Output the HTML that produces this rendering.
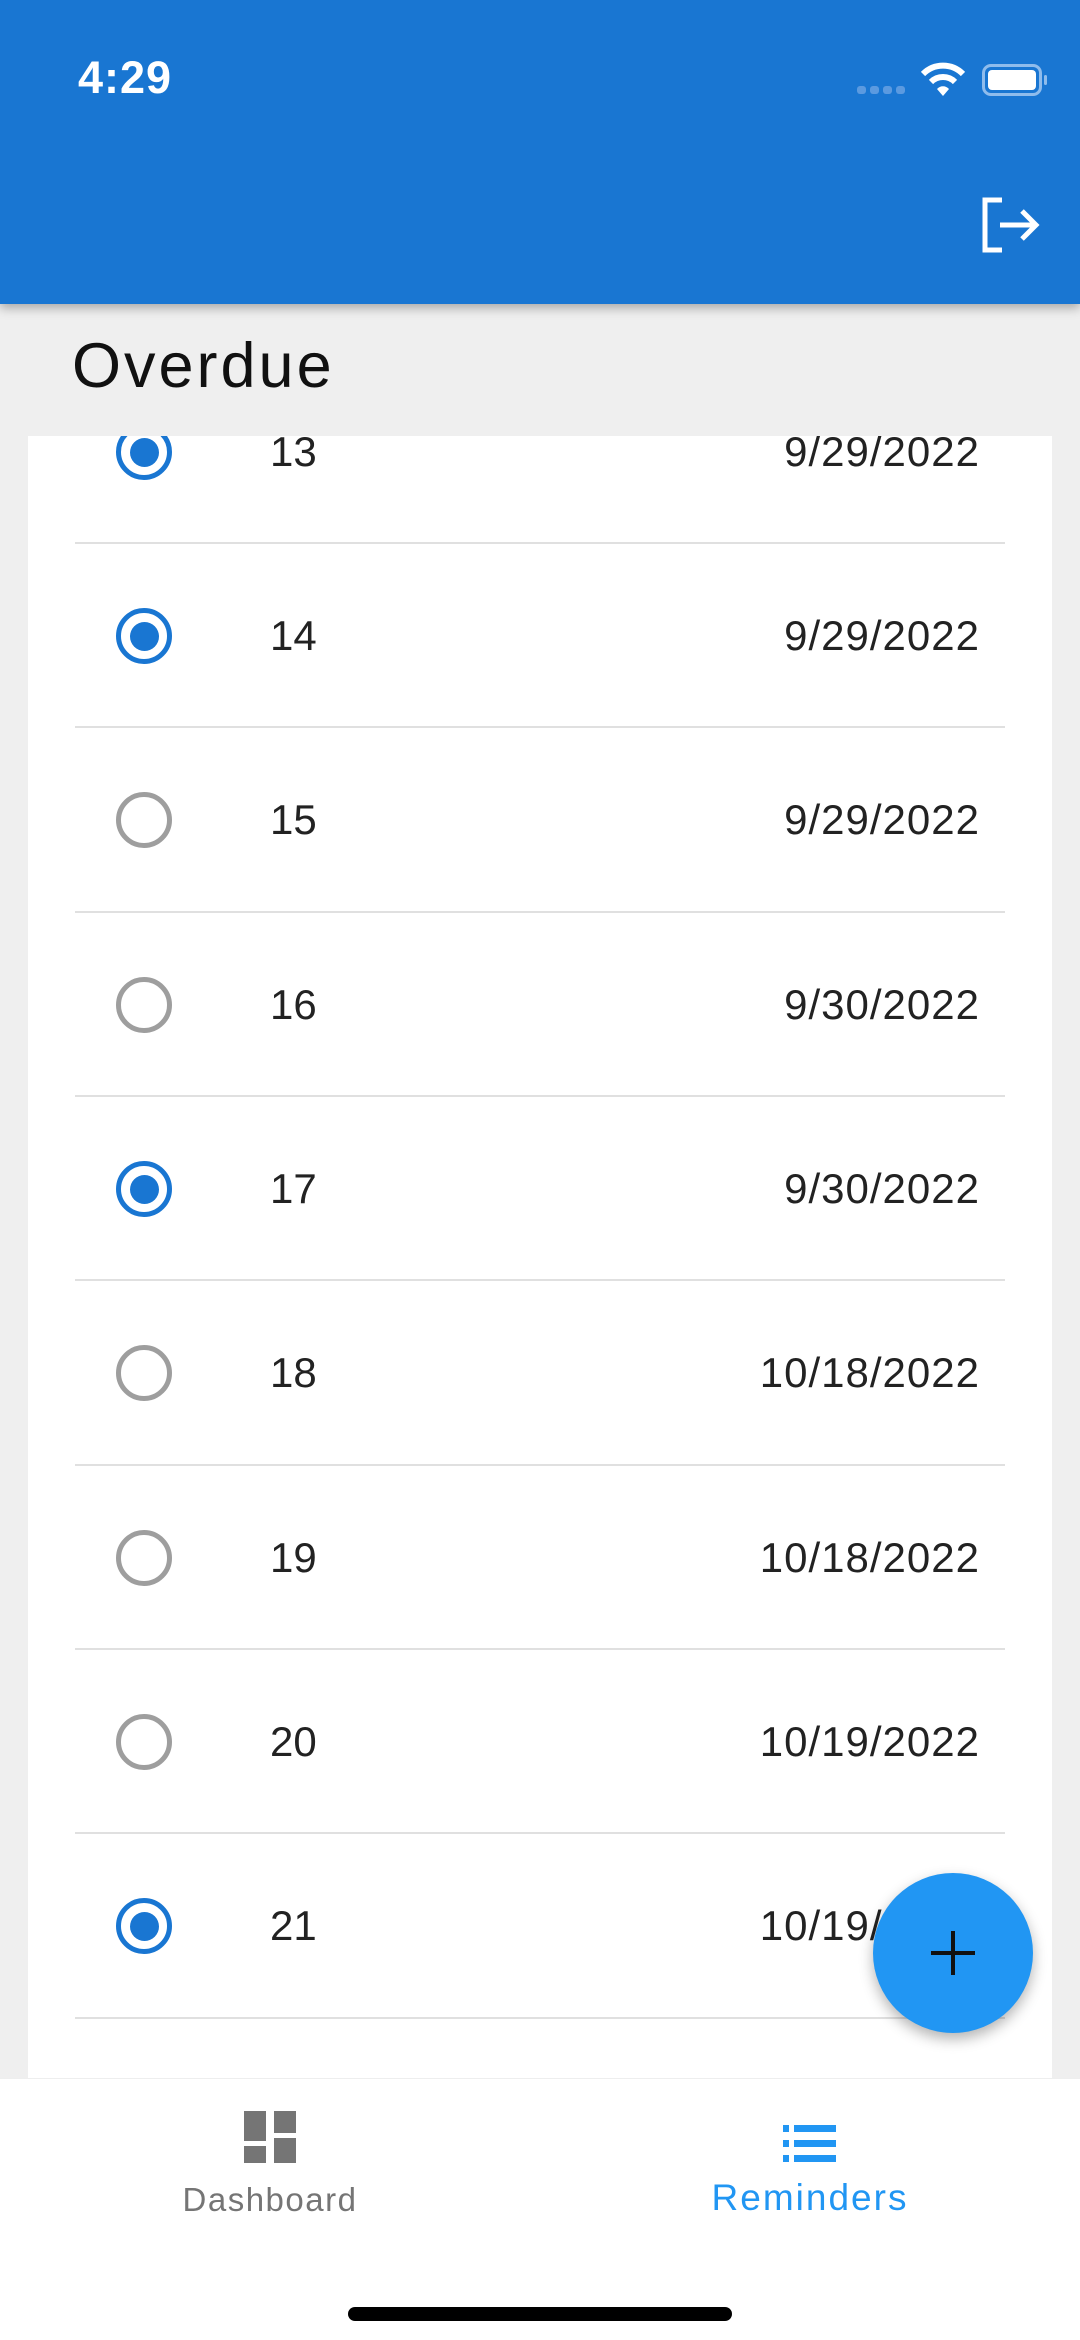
<!DOCTYPE html>
<html><head><meta charset="utf-8"><style>
*{margin:0;padding:0;box-sizing:border-box}
body{width:1080px;height:2340px;background:#efefef;position:relative;overflow:hidden;font-family:"Liberation Sans",sans-serif}
.bar{position:absolute;left:0;top:0;width:1080px;height:304px;background:#1976d2;box-shadow:0 4px 10px rgba(0,0,0,.3);z-index:3}
.time{position:absolute;left:78px;top:52px;color:#fff;font-size:45px;font-weight:bold;letter-spacing:1px}
.title{position:absolute;left:72px;top:330px;font-size:63px;color:#111;letter-spacing:3px}
.card{position:absolute;left:28px;top:436px;width:1024px;height:1642px;background:#fff;overflow:hidden}
.row{position:absolute;left:0;width:1024px;height:184px}
.radio{position:absolute;left:88px;top:64px;width:56px;height:56px;border-radius:50%;border:5px solid #9e9e9e}
.radio.on{border-color:#1976d2}
.radio.on::after{content:"";position:absolute;left:8.5px;top:8.5px;width:29px;height:29px;border-radius:50%;background:#1976d2}
.num{position:absolute;left:242px;top:68px;font-size:42px;color:#222}
.date{position:absolute;right:72px;top:68px;font-size:42px;color:#222;letter-spacing:1px}
.div{position:absolute;left:47px;width:930px;height:2px;background:#e0e0e0}
.nav{position:absolute;left:0;top:2078px;width:1080px;height:262px;background:#fff;border-top:1px solid #eee}
.fab{position:absolute;left:873px;top:1873px;width:160px;height:160px;border-radius:50%;background:#2196f3;box-shadow:0 6px 14px rgba(0,0,0,.3);z-index:4}
</style></head><body>
<div class="bar">
<div class="time">4:29</div>
<div style="position:absolute;left:857px;top:86px;width:50px;height:8px">
<span style="position:absolute;left:0;width:9px;height:8px;border-radius:3px;background:#5b9ae0"></span>
<span style="position:absolute;left:13px;width:9px;height:8px;border-radius:3px;background:#5b9ae0"></span>
<span style="position:absolute;left:26px;width:9px;height:8px;border-radius:3px;background:#5b9ae0"></span>
<span style="position:absolute;left:39px;width:9px;height:8px;border-radius:3px;background:#5b9ae0"></span>
</div>
<svg style="position:absolute;left:921px;top:62px" width="44" height="36" viewBox="0 0 44 36"><path d="M2 12 A28 28 0 0 1 42 12" stroke="#fff" stroke-width="6" fill="none"/><path d="M10 20 A17 17 0 0 1 34 20" stroke="#fff" stroke-width="6" fill="none"/><path d="M16 27 L22 34 L28 27 A8 8 0 0 0 16 27Z" fill="#fff"/></svg>
<div style="position:absolute;left:982px;top:64px;width:60px;height:32px;border:3px solid #8fbcec;border-radius:9px"><div style="position:absolute;left:3px;top:3px;width:48px;height:20px;background:#fff;border-radius:4px"></div></div>
<div style="position:absolute;left:1044px;top:75px;width:3px;height:10px;background:#8fbcec;border-radius:2px"></div>
<svg style="position:absolute;left:980px;top:197px" width="62" height="56" viewBox="0 0 62 56"><path d="M22 3 H5 V53 H22" stroke="#fff" stroke-width="5" fill="none"/><path d="M20 28 H55 M42 14 L56 28 L42 42" stroke="#fff" stroke-width="5" fill="none"/></svg>
</div>
<div class="title">Overdue</div>
<div class="card">
<div class="row" style="top:-76px"><div class="radio on"></div><div class="num">13</div><div class="date">9/29/2022</div></div>
<div class="div" style="top:106px"></div>
<div class="row" style="top:108px"><div class="radio on"></div><div class="num">14</div><div class="date">9/29/2022</div></div>
<div class="div" style="top:290px"></div>
<div class="row" style="top:292px"><div class="radio"></div><div class="num">15</div><div class="date">9/29/2022</div></div>
<div class="div" style="top:475px"></div>
<div class="row" style="top:477px"><div class="radio"></div><div class="num">16</div><div class="date">9/30/2022</div></div>
<div class="div" style="top:659px"></div>
<div class="row" style="top:661px"><div class="radio on"></div><div class="num">17</div><div class="date">9/30/2022</div></div>
<div class="div" style="top:843px"></div>
<div class="row" style="top:845px"><div class="radio"></div><div class="num">18</div><div class="date">10/18/2022</div></div>
<div class="div" style="top:1028px"></div>
<div class="row" style="top:1030px"><div class="radio"></div><div class="num">19</div><div class="date">10/18/2022</div></div>
<div class="div" style="top:1212px"></div>
<div class="row" style="top:1214px"><div class="radio"></div><div class="num">20</div><div class="date">10/19/2022</div></div>
<div class="div" style="top:1396px"></div>
<div class="row" style="top:1398px"><div class="radio on"></div><div class="num">21</div><div class="date">10/19/2022</div></div>
<div class="div" style="top:1581px"></div>
</div>
<div class="fab"><div style="position:absolute;left:58px;top:78px;width:44px;height:4px;background:#111"></div><div style="position:absolute;left:78px;top:58px;width:4px;height:44px;background:#111"></div></div>
<div class="nav">
<svg style="position:absolute;left:244px;top:32px" width="52" height="52" viewBox="0 0 52 52" fill="#757575"><rect x="0" y="0" width="22" height="30"/><rect x="30" y="0" width="22" height="22"/><rect x="0" y="35" width="22" height="17"/><rect x="30" y="27" width="22" height="25"/></svg>
<div style="position:absolute;left:0;width:540px;text-align:center;top:102px;font-size:33px;color:#757575;letter-spacing:1.5px">Dashboard</div>
<svg style="position:absolute;left:783px;top:46px" width="54" height="38" viewBox="0 0 54 38" fill="#2196f3"><rect x="0" y="0" width="6" height="7"/><rect x="11" y="0" width="42" height="7"/><rect x="0" y="15" width="6" height="7"/><rect x="11" y="15" width="42" height="7"/><rect x="0" y="30" width="6" height="7"/><rect x="11" y="30" width="42" height="7"/></svg>
<div style="position:absolute;left:540px;width:540px;text-align:center;top:98px;font-size:37px;color:#2196f3;letter-spacing:2px">Reminders</div>
<div style="position:absolute;left:348px;top:228px;width:384px;height:14px;border-radius:7px;background:#000"></div>
</div>
</body></html>
